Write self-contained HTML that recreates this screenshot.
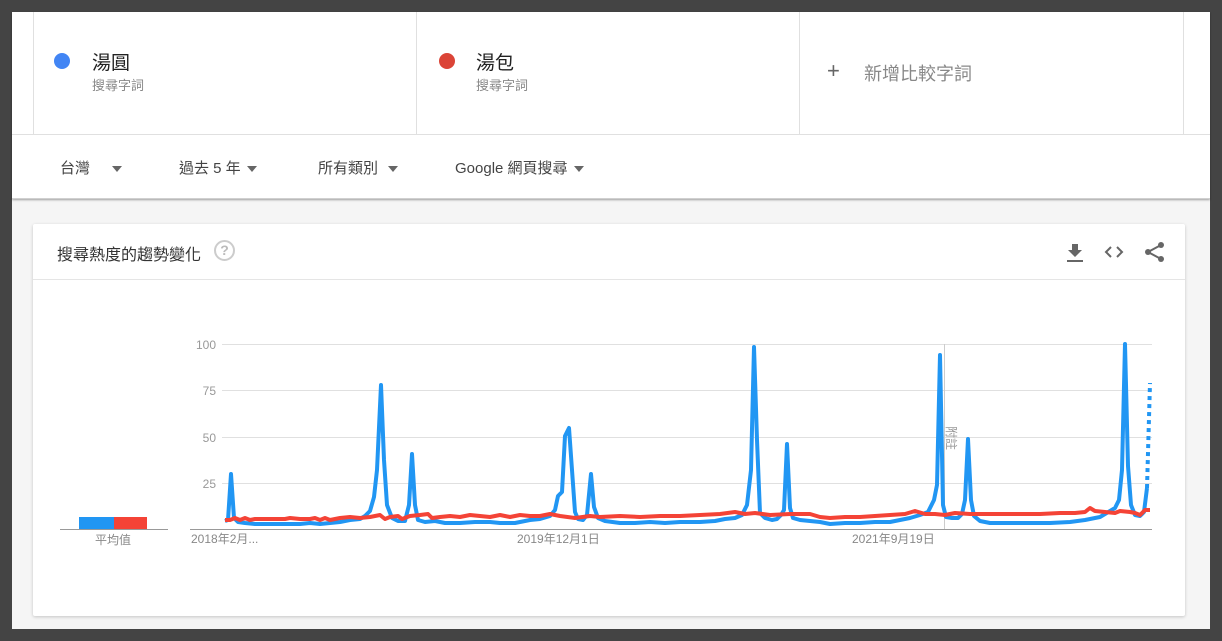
<!DOCTYPE html>
<html><head><meta charset="utf-8">
<style>
*{margin:0;padding:0;box-sizing:border-box}
body{width:1222px;height:641px;background:#444;position:relative;overflow:hidden;font-family:"Liberation Sans","Noto Sans CJK TC",sans-serif}
.top{position:absolute;left:12px;top:12px;width:1198px;height:187px;background:#fff;box-shadow:0 1px 2px rgba(0,0,0,.35);border-bottom:1px solid #d0d0d0}
.vl{position:absolute;top:0;width:1px;height:122px;background:#e0e0e0}
.hl{position:absolute;left:0;top:122px;width:1198px;height:1px;background:#e0e0e0}
.dot{position:absolute;width:16px;height:16px;border-radius:50%}
.term{position:absolute;font-size:19px;color:#222}
.sub{position:absolute;font-size:13px;color:#888}
.flt{position:absolute;top:145px;font-size:15px;color:#444}
.tri{display:inline-block;width:0;height:0;border-left:5px solid transparent;border-right:5px solid transparent;border-top:6px solid #666;vertical-align:middle;margin-left:6px}
.gray{position:absolute;left:12px;top:199px;width:1198px;height:430px;background:#f5f5f5}
.card{position:absolute;left:33px;top:224px;width:1152px;height:392px;background:#fff;box-shadow:0 1px 3px rgba(0,0,0,.2);border-radius:2px}
.title{position:absolute;left:24px;top:17px;font-size:16px;color:#333}
.q{position:absolute;left:181px;top:16px;width:21px;height:21px;border:2px solid #ccc;border-radius:50%;color:#bbb;font-size:14px;font-weight:bold;text-align:center;line-height:17px}
.chdr{position:absolute;left:0;top:55px;width:1152px;height:1px;background:#e5e5e5}
</style></head><body>
<div class="gray"></div>
<div class="top">
 <div class="vl" style="left:21px"></div>
 <div class="vl" style="left:404px"></div>
 <div class="vl" style="left:787px"></div>
 <div class="vl" style="left:1171px"></div>
 <div class="hl"></div>
 <div class="dot" style="left:42px;top:41px;background:#4285f4"></div>
 <div class="term" style="left:80px;top:36px">湯圓</div>
 <div class="sub" style="left:80px;top:63px">搜尋字詞</div>
 <div class="dot" style="left:427px;top:41px;background:#db4437"></div>
 <div class="term" style="left:464px;top:36px">湯包</div>
 <div class="sub" style="left:464px;top:63px">搜尋字詞</div>
 <div style="position:absolute;left:815px;top:48px;font-size:22px;color:#666;line-height:22px">+</div>
 <div style="position:absolute;left:852px;top:48px;font-size:18px;color:#888">新增比較字詞</div>
 <div class="flt" style="left:48px">台灣<span class="tri" style="margin-left:22px"></span></div>
 <div class="flt" style="left:167px">過去 5 年<span class="tri"></span></div>
 <div class="flt" style="left:306px">所有類別<span class="tri" style="margin-left:10px"></span></div>
 <div class="flt" style="left:443px">Google 網頁搜尋<span class="tri"></span></div>
</div>
<div class="card">
 <div class="title">搜尋熱度的趨勢變化</div>
 <div class="q">?</div>
 <div class="chdr"></div>
 <svg style="position:absolute;left:1031px;top:17px" width="24" height="24" viewBox="0 0 24 24"><path d="M8 3h6v6h4l-7 7-7-7h4z" fill="#666"/><rect x="3" y="19" width="16" height="2" fill="#666"/></svg>
 <svg style="position:absolute;left:1070px;top:17px" width="24" height="24" viewBox="0 0 24 24"><path d="M8 6l-5 5 5 5M14 6l5 5-5 5" stroke="#666" stroke-width="2" fill="none"/></svg>
 <svg style="position:absolute;left:1110px;top:16px" width="24" height="24" viewBox="0 0 24 24"><circle cx="18" cy="5" r="3" fill="#666"/><circle cx="5" cy="12" r="3" fill="#666"/><circle cx="18" cy="19" r="3" fill="#666"/><path d="M18 5L5 12l13 7" stroke="#666" stroke-width="2" fill="none"/></svg>
</div>
<svg style="position:absolute;left:0;top:0" width="1222" height="641">
 <g stroke="#e0e0e0" stroke-width="1">
  <line x1="222" y1="344.5" x2="1152" y2="344.5"/>
  <line x1="222" y1="390.5" x2="1152" y2="390.5"/>
  <line x1="222" y1="437.5" x2="1152" y2="437.5"/>
  <line x1="222" y1="483.5" x2="1152" y2="483.5"/>
 </g>
 <line x1="944.5" y1="344" x2="944.5" y2="530" stroke="#ccc"/>
 <line x1="60" y1="529.5" x2="168" y2="529.5" stroke="#999"/>
 <line x1="190" y1="529.5" x2="1152" y2="529.5" stroke="#999"/>
 <g font-size="12" fill="#999" font-family="Liberation Sans,sans-serif" text-anchor="end">
  <text x="216" y="349">100</text><text x="216" y="395">75</text><text x="216" y="442">50</text><text x="216" y="488">25</text>
 </g>
 <g font-size="12" fill="#888" font-family="Liberation Sans,Noto Sans CJK TC,sans-serif">
  <text x="191" y="543">2018年2月...</text>
  <text x="517" y="543">2019年12月1日</text>
  <text x="852" y="543">2021年9月19日</text>
  <text x="95" y="544">平均值</text>
 </g>
 <text x="0" y="0" font-size="12" fill="#999" font-family="Noto Sans CJK TC,sans-serif" transform="translate(947,426) rotate(90)">附註</text>
 <rect x="79" y="517" width="35" height="12" fill="#2196f3"/>
 <rect x="114" y="517" width="33" height="12" fill="#f44336"/>
 <polyline fill="none" stroke="#2196f3" stroke-width="4" stroke-linejoin="round" points="225,521 228,520 231,474 234,518 238,522 245,523 255,524 265,524 280,524 300,524 310,523 320,524 330,523 340,522 350,520 360,519 365,516 370,511 374,497 377,470 381,385 384,460 387,505 392,518 398,521 405,521 409,505 412,454 415,505 418,520 425,522 435,521 445,523 460,523 475,522 490,522 500,523 515,523 530,520 540,519 550,516 555,510 558,496 562,492 565,436 569,428 572,470 575,512 578,519 583,520 587,515 591,474 594,507 598,518 605,521 620,523 635,523 650,522 665,523 680,522 700,522 715,521 725,519 735,518 742,515 747,505 751,470 754,347 757,440 760,513 765,518 772,520 777,519 781,515 784,510 787,444 790,508 793,518 800,520 810,521 820,522 830,524 845,523 860,523 875,522 890,522 900,520 910,518 920,515 928,512 934,500 937,485 940,355 943,505 946,517 952,518 958,518 962,514 965,500 968,439 971,500 974,516 980,521 990,523 1010,523 1030,523 1050,523 1070,522 1085,520 1095,518 1100,517 1105,514 1110,511 1115,508 1119,500 1122,470 1125,344 1128,466 1131,505 1135,515 1140,516 1144,512 1147,488"/>
 <polyline fill="none" stroke="#f44336" stroke-width="4" stroke-linejoin="round" points="225,520 230,520 235,518 240,520 245,518 250,520 255,519 265,519 285,519 290,518 300,519 310,519 315,518 320,520 325,518 330,520 340,518 350,517 360,518 370,517 380,515 385,519 390,517 398,516 402,519 410,516 420,515 428,514 432,518 440,517 450,516 460,517 470,515 480,516 490,517 500,515 510,517 520,515 530,516 540,516 550,514 560,516 575,518 590,516 600,517 620,516 640,517 660,516 680,516 700,515 720,514 735,512 745,514 755,513 770,515 790,514 810,514 820,517 830,518 845,517 860,517 875,516 890,515 905,514 915,511 925,514 935,514 945,515 955,513 970,514 985,514 1000,514 1020,514 1040,514 1060,513 1075,513 1085,512 1090,508 1095,511 1105,512 1115,513 1120,511 1130,512 1135,513 1140,515 1145,510 1150,510"/>
 <line x1="1147" y1="488" x2="1150" y2="383" stroke="#2196f3" stroke-width="4" stroke-dasharray="4,4"/>
</svg>
</body></html>
